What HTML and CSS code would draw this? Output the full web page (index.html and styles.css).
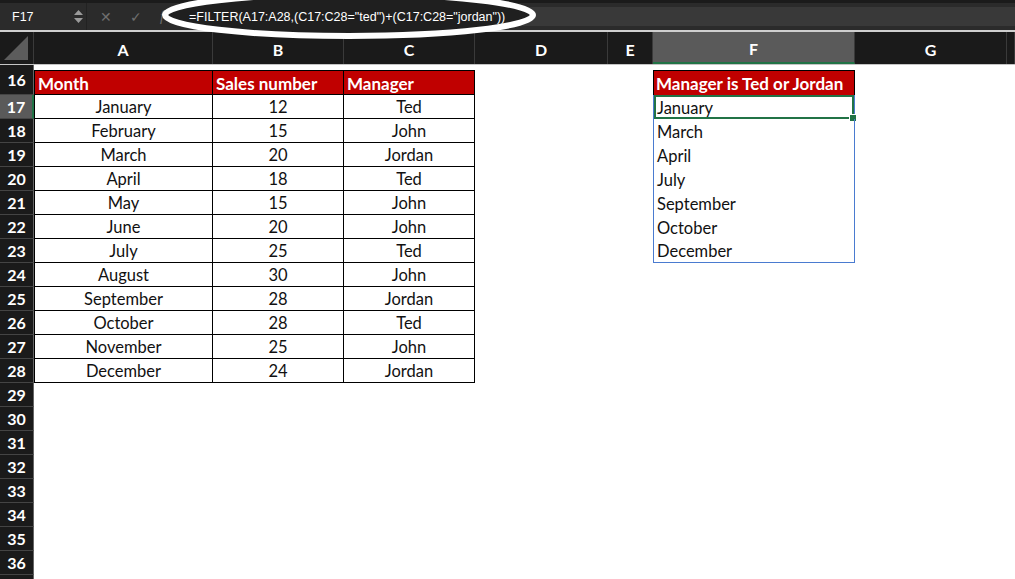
FILE: index.html
```html
<!DOCTYPE html>
<html lang="en">
<head>
  <meta charset="UTF-8" />
  <title>FILTER with OR</title>
  <link rel="stylesheet" href="styles.css">
</head>
<body>
  <div class="app">
    <!-- barra de formulas -->
    <div class="topbar">
      <div class="namebox">
        <span class="ref">F17</span>
        <svg class="spin" width="9" height="14" viewBox="0 0 9 14"><path d="M4.5 0 L9 5 L0 5 Z M0 8 L9 8 L4.5 13 Z" fill="#9a9a9a"/></svg>
      </div>
      <div class="controls">
        <span class="ctl">&#x2715;</span>
        <span class="ctl">&#x2713;</span>
        <span class="ctl fx">f</span>
      </div>
      <div class="formula">
        <span class="ftext">=FILTER(A17:A28,(C17:C28="ted")+(C17:C28="jordan"))</span>
      </div>
      <svg class="ring" width="1015" height="60" viewBox="0 0 1015 60">
        <ellipse cx="349" cy="15" rx="184" ry="21" fill="#1f1f1f" stroke="#fff" stroke-width="6"/>
      </svg>
    </div>

    <!-- encabezados de columna -->
    <div class="colheads">
      <div class="corner"><svg width="30" height="30" viewBox="0 0 30 30"><path d="M28 4 L28 28 L4 28 Z" fill="#5c5c5c"/></svg></div>
      <div class="ch">A</div>
      <div class="ch">B</div>
      <div class="ch">C</div>
      <div class="ch">D</div>
      <div class="ch">E</div>
      <div class="ch on">F</div>
      <div class="ch">G</div>
      <div class="ch"></div>
    </div>

    <div class="sheet" id="sheet">
      <div class="row r16">
        <div class="rh">16</div>
        <div class="c t hd first">Month</div>
        <div class="c t hd">Sales number</div>
        <div class="c t hd">Manager</div>
        <div class="c"></div>
        <div class="c"></div>
        <div class="c hd fbox">Manager is Ted or Jordan</div>
        <div class="c"></div>
        <div class="c"></div>
      </div>
    </div>
  </div>
  <script src="app.js"></script>
</body>
</html>
```

FILE: styles.css
```css
* {
  margin: 0;
  padding: 0;
  box-sizing: border-box;
}

body {
  background: #fff;
  font-family: "Lato", "Open Sans", sans-serif;
  overflow: hidden;
}

.app {
  width: 1015px;
  height: 579px;
  overflow: hidden;
  position: relative;
}

/* barra superior */
.topbar {
  height: 32px;
  background: #2b2b2b;
  border-top: 3px solid #1b1b1b;
  border-bottom: 2px solid #cfcfcf;
  display: flex;
  align-items: center;
  position: relative;
  font-family: "Liberation Sans", Arial, sans-serif;
  color: #fff;
}

.namebox {
  width: 87px;
  height: 100%;
  display: flex;
  align-items: center;
  justify-content: space-between;
  padding: 0 3px 0 12px;
  border-right: 1px solid #222;
  font-size: 12.5px;
}

.spin {
  margin-top: 1px;
}

.controls {
  display: flex;
  align-items: center;
  gap: 18px;
  padding-left: 13px;
  width: 90px;
  color: #6f6f6f;
  font-size: 14px;
}

.fx {
  font-family: "Liberation Serif", serif;
  font-style: italic;
}

.formula {
  flex: 1;
  height: 19px;
  background: #393939;
  display: flex;
  align-items: center;
  padding-left: 12px;
}

.ftext {
  position: relative;
  z-index: 2;
  font-size: 12.5px;
}

.ring {
  position: absolute;
  left: 0;
  top: -3px;
  z-index: 1;
  pointer-events: none;
}

/* encabezados */
.colheads,
.row {
  display: grid;
  grid-template-columns: 34px 179px 131px 131px 133px 45px 202px 152px 1fr;
}

.colheads {
  height: 33px;
  background: #1a1a1a;
  border-bottom: 1px solid #c4c4c4;
}

.corner {
  border-right: 1px solid #3a3a3a;
  display: flex;
  align-items: flex-end;
  justify-content: flex-end;
  padding: 0 3px 2px 0;
}

.ch {
  border-right: 1px solid #3a3a3a;
  color: #fff;
  font-size: 16px;
  font-weight: 700;
  display: flex;
  align-items: center;
  justify-content: center;
  padding-top: 2px;
}

.ch.on {
  background: #5a5a5a;
  border-bottom: 2px solid #217346;
}

/* filas */
.row {
  height: 24px;
}

.row.r16 {
  height: 30px;
}

.rh {
  background: #1a1a1a;
  color: #fff;
  font-size: 16px;
  font-weight: 700;
  display: flex;
  align-items: center;
  justify-content: center;
  border-bottom: 1px solid #444;
  border-right: 1px solid #666;
}

.rh.on {
  background: #5a5a5a;
  border-right: 2px solid #217346;
}

.c {
  font-size: 16.5px;
  color: #111;
  display: flex;
  align-items: center;
  white-space: nowrap;
  position: relative;
}

.c.t {
  border-right: 1px solid #000;
  border-bottom: 1px solid #000;
  justify-content: center;
  padding-top: 1px;
}

.c.first {
  border-left: 1px solid #000;
}

.r16 .c {
  margin-top: 5px;
}

.c.hd {
  background: #c00000;
  color: #fff;
  font-weight: 700;
  font-size: 17px;
  justify-content: flex-start;
  padding-left: 3px;
  border-top: 1px solid #000;
}

.c.fbox {
  border: 1px solid #000;
  border-bottom: none;
  padding-left: 2px;
}

/* rango derramado */
.c.spill {
  border-left: 1px solid #4a7bd0;
  border-right: 1px solid #4a7bd0;
  padding-left: 3px;
  padding-top: 1px;
}

.c.spill.last {
  border-bottom: 1px solid #4a7bd0;
}

.c.sel {
  box-shadow: inset 0 0 0 2px #217346;
}

.c.sel::after {
  content: "";
  position: absolute;
  right: -3px;
  bottom: -3px;
  width: 6px;
  height: 6px;
  background: #217346;
  border: 1px solid #fff;
}
```

FILE: app.js
```js
// datos de la tabla
var datos = [
  ["January", 12, "Ted"],
  ["February", 15, "John"],
  ["March", 20, "Jordan"],
  ["April", 18, "Ted"],
  ["May", 15, "John"],
  ["June", 20, "John"],
  ["July", 25, "Ted"],
  ["August", 30, "John"],
  ["September", 28, "Jordan"],
  ["October", 28, "Ted"],
  ["November", 25, "John"],
  ["December", 24, "Jordan"]
];

// =FILTER(A17:A28,(C17:C28="ted")+(C17:C28="jordan"))
var filtrado = datos.filter(function (d) {
  var m = d[2].toLowerCase();
  return m === "ted" || m === "jordan";
}).map(function (d) { return d[0]; });

var sheet = document.getElementById("sheet");

for (var n = 17; n <= 37; n++) {
  var i = n - 17;
  var row = document.createElement("div");
  row.className = "row";
  // la fila 37 apenas asoma, sin numero visible
  var label = n < 37 ? n : "";
  var html = '<div class="rh' + (n === 17 ? ' on' : '') + '">' + label + '</div>';
  if (i < datos.length) {
    html += '<div class="c t first">' + datos[i][0] + '</div>';
    html += '<div class="c t">' + datos[i][1] + '</div>';
    html += '<div class="c t">' + datos[i][2] + '</div>';
  } else {
    html += '<div class="c"></div><div class="c"></div><div class="c"></div>';
  }
  html += '<div class="c"></div><div class="c"></div>';
  if (i < filtrado.length) {
    var cls = "c spill";
    if (i === 0) cls += " sel";
    if (i === filtrado.length - 1) cls += " last";
    html += '<div class="' + cls + '">' + filtrado[i] + '</div>';
  } else {
    html += '<div class="c"></div>';
  }
  html += '<div class="c"></div><div class="c"></div>';
  row.innerHTML = html;
  sheet.appendChild(row);
}
```
